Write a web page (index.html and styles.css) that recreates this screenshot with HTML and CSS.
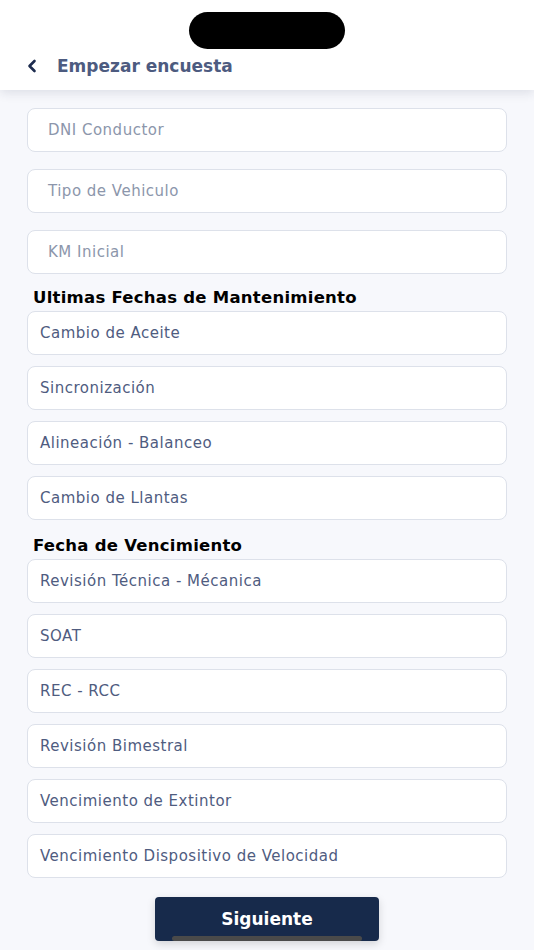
FILE: index.html
```html
<!DOCTYPE html>
<html lang="es">
<head>
    <meta charset="UTF-8">
    <meta name="viewport" content="width=device-width, initial-scale=1.0">
    <title>Empezar encuesta</title>
    <link rel="stylesheet" href="styles.css">
</head>
<body>

    <!-- Header -->
    <div class="header">
        <div class="notch"></div>
        <div class="title-row">
            <svg class="back" width="12" height="14" viewBox="0 0 12 14">
                <path d="M8.5 2 L3.5 7 L8.5 12" fill="none" stroke="#1d2c4f" stroke-width="2.6" stroke-linecap="round" stroke-linejoin="round"/>
            </svg>
            <span class="title">Empezar encuesta</span>
        </div>
    </div>

    <!-- Form -->
    <div class="form">
        <div class="field placeholder">DNI Conductor</div>
        <div class="field placeholder">Tipo de Vehiculo</div>
        <div class="field placeholder">KM Inicial</div>

        <h3 class="section">Ultimas Fechas de Mantenimiento</h3>
        <div class="group">
            <div class="field">Cambio de Aceite</div>
            <div class="field">Sincronización</div>
            <div class="field">Alineación - Balanceo</div>
            <div class="field">Cambio de Llantas</div>
        </div>

        <h3 class="section">Fecha de Vencimiento</h3>
        <div class="group">
            <div class="field">Revisión Técnica - Mécanica</div>
            <div class="field">SOAT</div>
            <div class="field">REC - RCC</div>
            <div class="field">Revisión Bimestral</div>
            <div class="field">Vencimiento de Extintor</div>
            <div class="field">Vencimiento Dispositivo de Velocidad</div>
        </div>

        <div class="actions">
            <button class="btn">Siguiente</button>
        </div>
    </div>

    <div class="home-bar"></div>
</body>
</html>
```

FILE: styles.css
```css
/* Global Styles */
* {
    margin: 0;
    padding: 0;
    box-sizing: border-box;
}

body {
    font-family: "DejaVu Sans", "Liberation Sans", sans-serif;
    background-color: #f7f8fc;
    width: 534px;
    height: 950px;
    overflow: hidden;
    position: relative;
}

/* Header */
.header {
    height: 90px;
    background-color: #ffffff;
    box-shadow: 0 3px 10px rgba(30, 40, 70, 0.12);
    padding-top: 12px;
    position: relative;
    z-index: 2;
}

.notch {
    width: 156px;
    height: 37px;
    margin: 0 auto;
    background-color: #000;
    border-radius: 19px;
}

.title-row {
    display: flex;
    align-items: center;
    padding: 7px 0 0 26px;
}

.back {
    display: block;
}

.title {
    margin-left: 19px;
    font-size: 17px;
    font-weight: bold;
    color: #4d5b80;
}

/* Form */
.form {
    padding: 18px 27px 0;
    display: flex;
    flex-direction: column;
    gap: 17px;
}

.group {
    display: flex;
    flex-direction: column;
    gap: 11px;
}

.field {
    height: 44px;
    background-color: #ffffff;
    border: 1px solid #dde1ea;
    border-radius: 8px;
    display: flex;
    align-items: center;
    padding-left: 12px;
    font-size: 15px;
    color: #4f5c7f;
    letter-spacing: 0.5px;
}

.field.placeholder {
    padding-left: 20px;
    color: #8c96ab;
}

.section {
    font-size: 16.5px;
    font-weight: bold;
    color: #000;
    padding-left: 6px;
    margin: -4px 0 -15px;
    line-height: 22px;
    letter-spacing: 0.25px;
}

.group + .section {
    margin-top: -2px;
}

/* Button */
.actions {
    display: flex;
    justify-content: center;
    margin-top: 2px;
}

.btn {
    width: 224px;
    height: 44px;
    border: none;
    border-radius: 4px;
    background-color: #172a4b;
    color: #ffffff;
    font-family: "DejaVu Sans", "Liberation Sans", sans-serif;
    font-size: 17px;
    font-weight: bold;
    box-shadow: 0 3px 8px rgba(0, 0, 0, 0.15);
}

.home-bar {
    position: absolute;
    left: 172px;
    bottom: 9px;
    width: 190px;
    height: 5px;
    border-radius: 3px;
    background-color: #4a4a4a;
}
```
